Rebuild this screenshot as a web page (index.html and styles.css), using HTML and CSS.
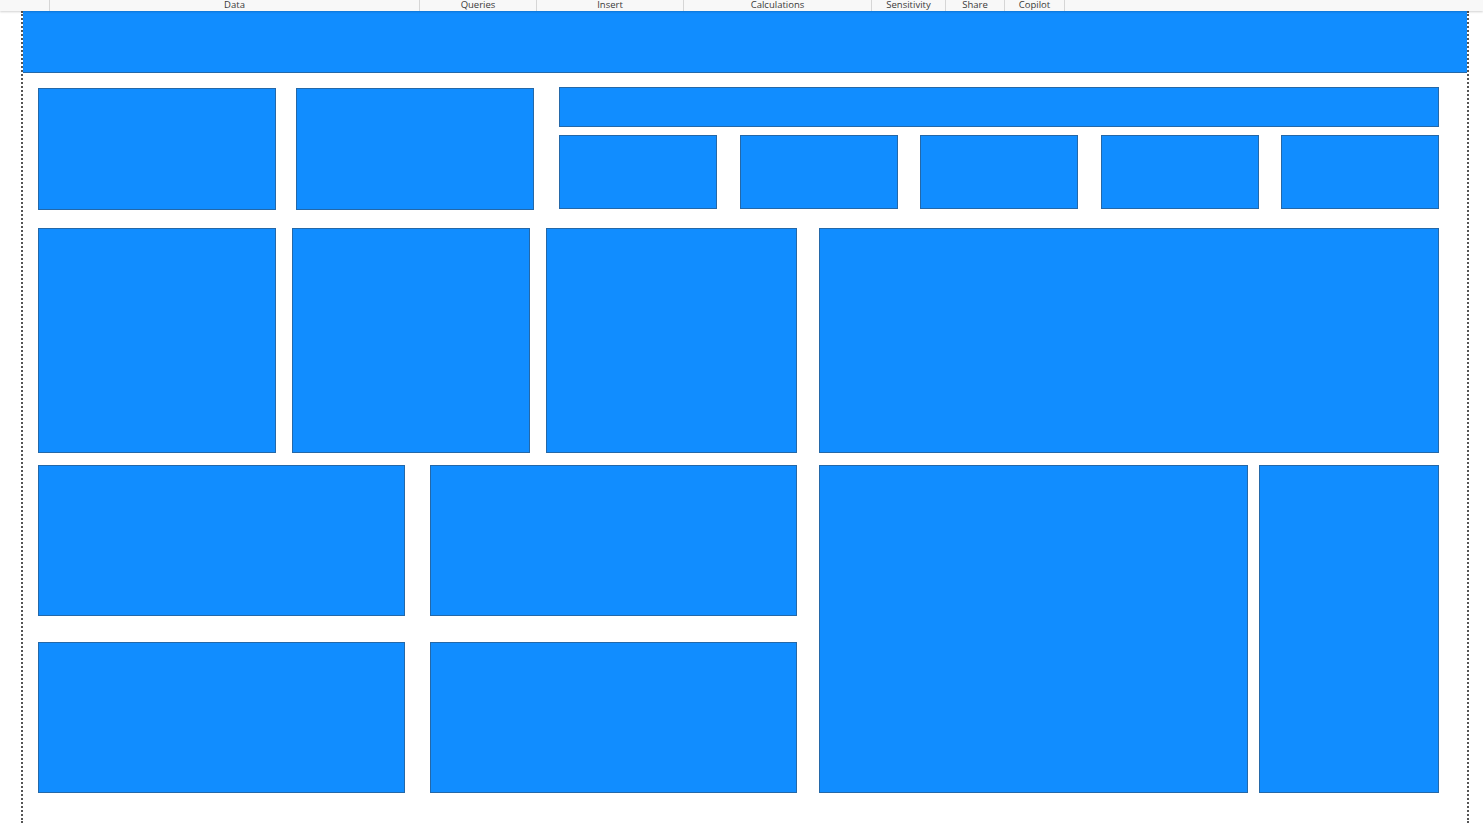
FILE: index.html
```
<!DOCTYPE html>
<html>
<head>
  <meta charset="utf-8">
  <title>Report canvas</title>
  <meta name="viewport" content="width=device-width, initial-scale=1">
  <link rel="stylesheet" href="styles.css">
</head>
<body>

<div class="ribbon">
  <div class="group g-lead"></div>
  <div class="group g-data">Data</div>
  <div class="group g-queries">Queries</div>
  <div class="group g-insert">Insert</div>
  <div class="group g-calc">Calculations</div>
  <div class="group g-sens">Sensitivity</div>
  <div class="group g-share">Share</div>
  <div class="group g-copilot">Copilot</div>
</div>

<div class="canvas">
  <div class="header visual"></div>

  <div class="page">
    <div class="row row-top">
      <div class="visual card-lg"></div>
      <div class="visual card-lg"></div>
      <div class="kpi-group">
        <div class="visual slicer-bar"></div>
        <div class="kpi-row">
          <div class="visual kpi"></div>
          <div class="visual kpi"></div>
          <div class="visual kpi"></div>
          <div class="visual kpi"></div>
          <div class="visual kpi"></div>
        </div>
      </div>
    </div>

    <div class="row row-mid">
      <div class="visual mid-a"></div>
      <div class="visual mid-b"></div>
      <div class="visual mid-c"></div>
      <div class="visual mid-d"></div>
    </div>

    <div class="row row-bottom">
      <div class="chart-grid">
        <div class="visual"></div>
        <div class="visual"></div>
        <div class="visual"></div>
        <div class="visual"></div>
      </div>
      <div class="visual tall-main"></div>
      <div class="visual tall-side"></div>
    </div>
  </div>
</div>

</body>
</html>
```

FILE: styles.css
```
html, body {
  margin: 0;
  padding: 0;
  background: #ffffff;
  font-family: 'Open Sans', 'Noto Sans', sans-serif;
  overflow: hidden;
}
.ribbon {
  height: 11px;
  display: flex;
  background: #f8f8f8;
  box-shadow: 0 1px 2px rgba(0,0,0,0.18);
  position: relative;
  z-index: 2;
}
.group {
  box-sizing: border-box;
  height: 11px;
  border-right: 1px solid #d6d6d6;
  font-size: 9.5px;
  line-height: 10px;
  color: #3a3a3a;
  text-align: center;
  overflow: hidden;
}
.g-lead { width: 50px; }
.g-data { width: 370px; }
.g-queries { width: 117px; }
.g-insert { width: 147px; }
.g-calc { width: 188px; }
.g-sens { width: 74px; }
.g-share { width: 59px; }
.g-copilot { width: 60px; }

.canvas {
  box-sizing: border-box;
  margin-left: 21px;
  width: 1448px;
  height: 812px;
  border-left: 2px dotted #555;
  border-right: 2px dotted #555;
  background: #fff;
}
.visual {
  box-sizing: border-box;
  background: #118dff;
  border: 1px solid #2468a8;
}
.header {
  height: 62px;
  border-left: none;
  border-right: none;
  border-top: none;
}
.page {
  padding: 14px 0 0 15px;
}
.row {
  display: flex;
  align-items: flex-start;
}

/* top row */
.card-lg {
  width: 238px;
  height: 122px;
  margin-top: 1px;
  margin-right: 20px;
}
.card-lg + .card-lg {
  margin-right: 25px;
}
.kpi-group {
  width: 880px;
}
.slicer-bar {
  height: 40px;
  margin-bottom: 8px;
}
.kpi-row {
  display: flex;
  justify-content: space-between;
}
.kpi {
  width: 158px;
  height: 74px;
}

/* middle row */
.row-mid {
  margin-top: 18px;
  gap: 16px;
}
.row-mid .visual {
  height: 225px;
}
.mid-a, .mid-b { width: 238px; }
.mid-c { width: 251px; margin-right: 6px; }
.mid-d { width: 620px; }

/* bottom block */
.row-bottom {
  margin-top: 12px;
}
.chart-grid {
  display: grid;
  grid-template-columns: 367px 367px;
  grid-auto-rows: 151px;
  column-gap: 25px;
  row-gap: 26px;
  margin-right: 22px;
}
.tall-main {
  width: 429px;
  height: 328px;
  margin-right: 11px;
}
.tall-side {
  width: 180px;
  height: 328px;
}
```
